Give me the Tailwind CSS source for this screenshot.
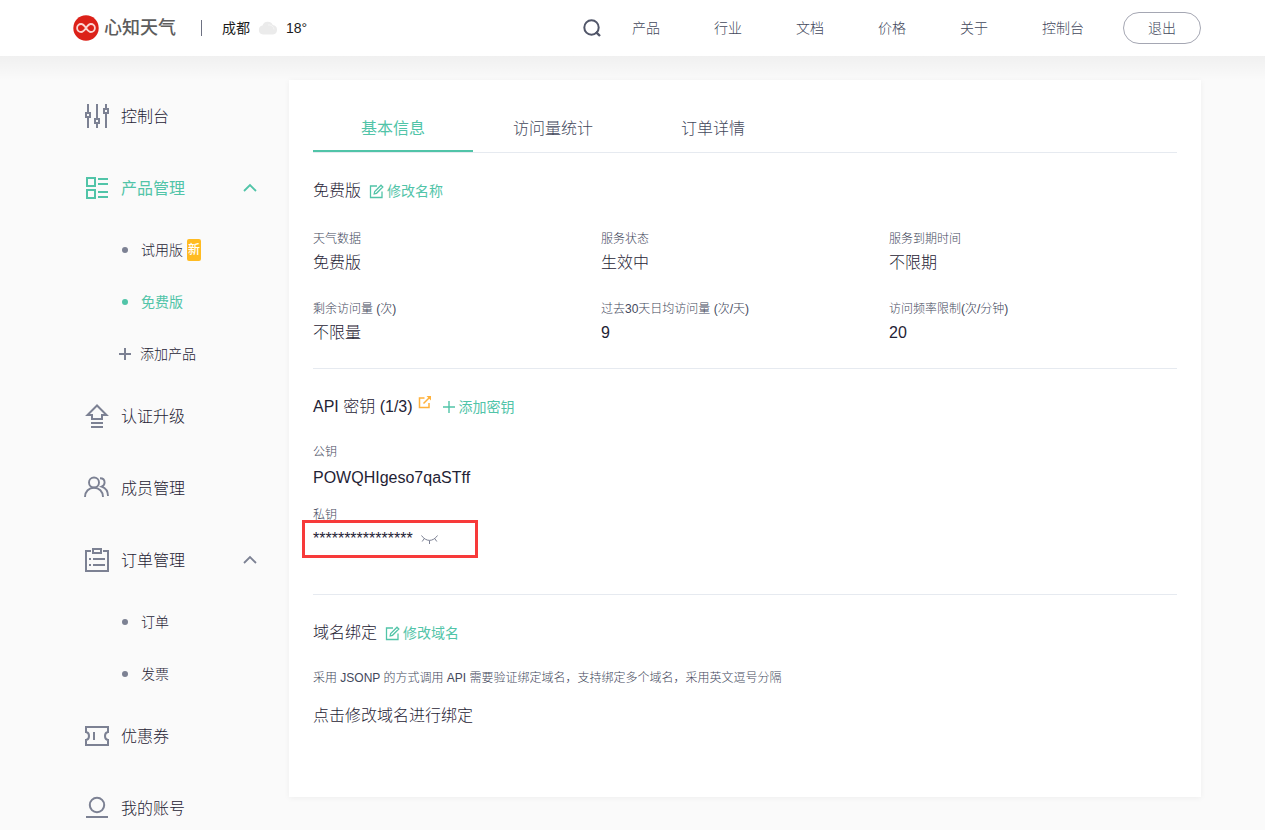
<!DOCTYPE html>
<html lang="zh-CN">
<head>
<meta charset="utf-8">
<meta name="viewport" content="width=device-width, initial-scale=1">
<title>心知天气 控制台</title>
<script src="https://cdn.jsdelivr.net/npm/@tailwindcss/browser@4"></script>
</head>
<body class="bg-[#fafafa] font-['Liberation_Sans','Noto_Sans_CJK_SC',sans-serif] font-light text-[#1f2335]">

<header class="relative flex h-14 items-center justify-between bg-white px-16 text-sm text-[#43485c] after:pointer-events-none after:absolute after:inset-x-0 after:top-full after:h-6 after:bg-linear-to-b after:from-black/4 after:to-transparent">
  <div class="flex items-center pl-2">
    <a href="#" class="flex items-center gap-1 text-lg leading-6 font-medium text-[#5d5d5d]">
      <svg class="size-7" viewBox="0 0 28 28" fill="none" aria-hidden="true">
        <circle cx="14" cy="14" r="12.7" fill="#dc2119"/>
        <path d="M14 14c-1.700 2.600-2.900 4-4.900 4a4 4 0 0 1 0-8c2 0 3.200 1.400 4.900 4s2.900 4 4.900 4a4 4 0 0 0 0-8c-2 0-3.200 1.400-4.900 4z" stroke="#fbd5d2" stroke-width="1.800"/>
      </svg>
      <span>心知天气</span>
    </a>
    <span class="ml-[25px] h-4 w-px bg-[#6d7182]"></span>
    <span class="ml-5 font-normal text-[#1c1c1c]">成都</span>
    <svg class="ml-2 h-4 w-5" viewBox="0 0 20 16" aria-hidden="true">
      <path d="M5 14.500a4.500 4.500 0 0 1-.5-8.900A5.500 5.500 0 0 1 14.800 5a4.800 4.800 0 0 1 .2 9.500z" fill="#ebebeb"/>
      <path d="M10 5a5 5 0 0 1 6 4.500" stroke="#f5f5f5" fill="none"/>
    </svg>
    <span class="ml-2 text-[#1c1c1c]">18°</span>
  </div>
  <nav class="flex items-center">
    <button type="button" aria-label="搜索" class="mr-[31px]">
      <svg class="size-[18px]" viewBox="0 0 18 18" fill="none" stroke="#515669" stroke-width="2" aria-hidden="true"><circle cx="8.500" cy="8.500" r="7.200"/><path d="M12.800 12.800l4.200 4.200" stroke-width="2.400"/></svg>
    </button>
    <div class="flex gap-[54px]">
      <a href="#">产品</a><a href="#">行业</a><a href="#">文档</a><a href="#">价格</a><a href="#">关于</a><a href="#">控制台</a>
    </div>
    <button type="button" class="ml-[39px] h-8 rounded-full border border-[#a5a7b3] px-6">退出</button>
  </nav>
</header>

<div class="flex items-start px-16 pt-6">
  <aside class="w-[225px] shrink-0 pr-8 pl-[21px]">
    <ul class="text-base [&_svg]:shrink-0">
      <li>
        <a href="#" class="flex h-[72px] items-center gap-3">
          <svg class="size-6" viewBox="0 0 24 24" fill="none" stroke="#7c8193" stroke-width="2" aria-hidden="true"><path d="M3 0v8M3 14v10M12 0v14M12 20v4M21 0v4M21 10v14"/><path d="M1 9h4v4H1zM10 15h4v4h-4zM19 5h4v4h-4z"/></svg>
          <span class="pt-[2px]">控制台</span>
        </a>
      </li>
      <li>
        <a href="#" class="flex h-[72px] items-center gap-3 text-[#51c4a8]">
          <svg class="size-6" viewBox="0 0 24 24" fill="none" stroke="currentColor" stroke-width="2" aria-hidden="true"><path d="M2 2h8v8H2zM2 14h8v8H2zM13 3h10M13 8h10M13 16h10M13 21h10"/></svg>
          <span class="grow pt-[2px] font-normal">产品管理</span>
          <svg class="h-3 w-[14px]" viewBox="0 0 14 12" fill="none" stroke="currentColor" stroke-width="1.800" aria-hidden="true"><path d="M1 9l6-6 6 6"/></svg>
        </a>
        <ul class="pl-[33px] text-sm">
          <li><a href="#" class="flex h-[52px] items-center"><span class="mr-[13px] ml-1 size-[6px] rounded-full bg-[#7c8193]"></span>试用版<span class="ml-1 flex h-[22px] w-[14px] items-center justify-center rounded-xs bg-[#ffbb22] text-xs font-medium text-white">新</span></a></li>
          <li><a href="#" class="flex h-[52px] items-center font-normal text-[#51c4a8]"><span class="mr-[13px] ml-1 size-[6px] rounded-full bg-[#51c4a8]"></span>免费版</a></li>
          <li><a href="#" class="flex h-[52px] items-center gap-[9px]"><svg class="-ml-px size-[14px]" viewBox="0 0 14 14" fill="none" stroke="#7c8193" stroke-width="2" aria-hidden="true"><path d="M8 1v12M2 7h12"/></svg>添加产品</a></li>
        </ul>
      </li>
      <li>
        <a href="#" class="flex h-[72px] items-center gap-3">
          <svg class="size-6" viewBox="0 0 24 24" fill="none" stroke="#7c8193" stroke-width="2" aria-hidden="true"><path d="M12 1.500L2.500 11H7v4h10v-4h4.500zM6 19h12M6 23h12"/></svg>
          <span class="pt-[2px]">认证升级</span>
        </a>
      </li>
      <li>
        <a href="#" class="flex h-[72px] items-center gap-3">
          <svg class="size-6 overflow-visible" viewBox="0 0 24 24" fill="none" stroke="#7c8193" stroke-width="1.900" aria-hidden="true"><circle cx="9" cy="6.500" r="5"/><path d="M0 21c0-5.500 4-9.300 9-9.300s9 3.800 9 9.300M15 2.200c2.800 0 4.600 1.700 4.600 4.200 0 2-1.200 3.400-3 4.200 3.800 1.300 6.400 4.600 6.400 9.400"/></svg>
          <span class="pt-[2px]">成员管理</span>
        </a>
      </li>
      <li>
        <a href="#" class="flex h-[72px] items-center gap-3">
          <svg class="size-6" viewBox="0 0 24 24" fill="none" stroke="#7c8193" stroke-width="2" aria-hidden="true"><path d="M6 3H1v20h22V3h-5M8 1h8v4H8zM4 11h2M8 11h12M4 17h2M8 17h12"/></svg>
          <span class="grow pt-[2px]">订单管理</span>
          <svg class="h-3 w-[14px]" viewBox="0 0 14 12" fill="none" stroke="#7c8193" stroke-width="1.800" aria-hidden="true"><path d="M1 9l6-6 6 6"/></svg>
        </a>
        <ul class="pl-[33px] text-sm">
          <li><a href="#" class="flex h-[52px] items-center"><span class="mr-[13px] ml-1 size-[6px] rounded-full bg-[#7c8193]"></span>订单</a></li>
          <li><a href="#" class="flex h-[52px] items-center"><span class="mr-[13px] ml-1 size-[6px] rounded-full bg-[#7c8193]"></span>发票</a></li>
        </ul>
      </li>
      <li>
        <a href="#" class="flex h-[72px] items-center gap-3">
          <svg class="size-6" viewBox="0 0 24 24" fill="none" stroke="#7c8193" stroke-width="2" aria-hidden="true"><path d="M1 3h22v5c-4 .5-4 7.500 0 8v5H1v-5c4-.5 4-7.500 0-8zM9 8v8"/></svg>
          <span class="pt-[2px]">优惠券</span>
        </a>
      </li>
      <li>
        <a href="#" class="flex h-[72px] items-center gap-3">
          <svg class="size-6" viewBox="0 0 24 24" fill="none" stroke="#7c8193" stroke-width="2" aria-hidden="true"><circle cx="12" cy="9" r="7.200"/><path d="M1 21h22"/></svg>
          <span class="pt-[2px]">我的账号</span>
        </a>
      </li>
    </ul>
  </aside>

  <main class="relative min-w-0 grow bg-white px-6 pt-6 pb-[69px] text-base shadow-[0_1px_6px_rgba(0,0,0,0.05)]">
    <div class="flex border-b border-[#e6eaf0] text-[#43485c]" role="tablist">
      <button type="button" role="tab" aria-selected="true" class="h-12 w-40 border-b-2 border-[#51c4a8] pt-1 font-normal text-[#51c4a8]">基本信息</button>
      <button type="button" role="tab" aria-selected="false" class="h-12 w-40 border-b-2 border-transparent pt-1">访问量统计</button>
      <button type="button" role="tab" aria-selected="false" class="h-12 w-40 border-b-2 border-transparent pt-1">订单详情</button>
    </div>

    <section class="border-b border-[#e6eaf0] pt-[26px] pb-[23px]">
      <h2 class="flex items-center gap-2">免费版
        <a href="#" class="flex items-center gap-[3px] text-sm font-normal text-[#51c4a8]">
          <svg class="size-[15px]" viewBox="0 0 15 15" fill="none" stroke="currentColor" stroke-width="1.300" aria-hidden="true"><path d="M8 2H1.500v11.500H13V7.500M5.200 9.800l.5-2.300L12 1.200l1.800 1.800-6.300 6.300z"/></svg>修改名称</a>
      </h2>
      <dl class="mt-6 grid grid-cols-3 gap-y-[22px]">
        <div><dt class="text-xs leading-6 text-[#43485c]">天气数据</dt><dd>免费版</dd></div>
        <div><dt class="text-xs leading-6 text-[#43485c]">服务状态</dt><dd>生效中</dd></div>
        <div><dt class="text-xs leading-6 text-[#43485c]">服务到期时间</dt><dd>不限期</dd></div>
        <div><dt class="text-xs leading-6 text-[#43485c]">剩余访问量 (次)</dt><dd>不限量</dd></div>
        <div><dt class="text-xs leading-6 text-[#43485c]">过去30天日均访问量 (次/天)</dt><dd>9</dd></div>
        <div><dt class="text-xs leading-6 text-[#43485c]">访问频率限制(次/分钟)</dt><dd>20</dd></div>
      </dl>
    </section>

    <section class="border-b border-[#e6eaf0] pt-[26px] pb-[43px]">
      <h2 class="flex items-center">API 密钥 (1/3)
        <a href="#" aria-label="查看说明" class="mb-[10px] ml-[5px]"><svg class="size-[14px]" viewBox="0 0 14 14" fill="none" stroke="#ffb13b" stroke-width="1.500" aria-hidden="true"><path d="M6.500 3H1.500v9.500H11V8M5.500 8.500L11.500 2.500"/><path d="M8.500 1H13v4.500z" fill="#ffb13b" stroke="none"/></svg></a>
        <a href="#" class="ml-[10px] flex items-center gap-[3px] text-sm font-normal text-[#51c4a8]"><svg class="size-[14px]" viewBox="0 0 14 14" fill="none" stroke="currentColor" stroke-width="1.400" aria-hidden="true"><path d="M7 1v12M1 7h12"/></svg>添加密钥</a>
      </h2>
      <dl class="mt-[21px]">
        <dt class="text-xs leading-6 text-[#43485c]">公钥</dt>
        <dd class="mt-[2px]">POWQHIgeso7qaSTff</dd>
        <dt class="mt-[13px] text-xs leading-6 text-[#43485c]">私钥</dt>
        <dd class="relative flex items-center gap-2">
          <span>****************</span>
          <button type="button" aria-label="显示私钥"><svg class="h-3 w-[17px]" viewBox="0 0 17 12" fill="none" stroke="#7c8193" stroke-width="1" aria-hidden="true"><path d="M.5 2.500c4.500 6.500 11.500 6.500 16 0M3.300 5.500L1.200 8.500M8.500 7.500V11M13.700 5.500l2.100 3"/></svg></button>
          <span class="pointer-events-none absolute -top-[7px] -left-[11px] h-[38px] w-44 border-3 border-[#f73a3a]"></span>
        </dd>
      </dl>
    </section>

    <section class="pt-[26px]">
      <h2 class="flex items-center gap-2">域名绑定
        <a href="#" class="flex items-center gap-[3px] text-sm font-normal text-[#51c4a8]">
          <svg class="size-[15px]" viewBox="0 0 15 15" fill="none" stroke="currentColor" stroke-width="1.300" aria-hidden="true"><path d="M8 2H1.500v11.500H13V7.500M5.200 9.800l.5-2.300L12 1.200l1.800 1.800-6.300 6.300z"/></svg>修改域名</a>
      </h2>
      <p class="mt-[21px] text-xs leading-6 text-[#43485c]">采用 JSONP 的方式调用 API 需要验证绑定域名，支持绑定多个域名，采用英文逗号分隔</p>
      <p class="mt-[14px]">点击修改域名进行绑定</p>
    </section>
  </main>
</div>
</body>
</html>
